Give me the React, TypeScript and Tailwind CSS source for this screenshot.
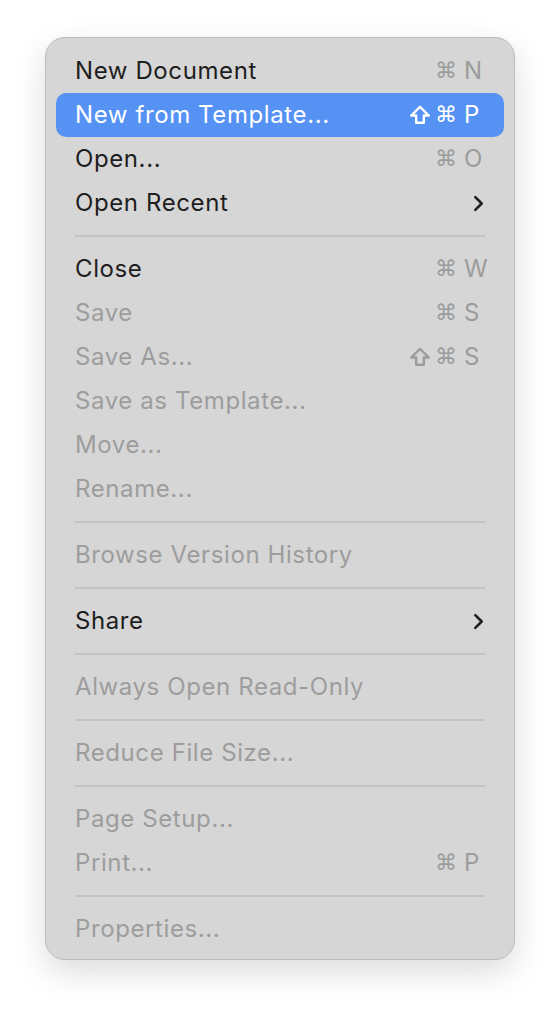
import React from 'react';

type Item =
  | { type: 'sep' }
  | { type: 'item'; label: string; mods?: string; key?: string; disabled?: boolean; selected?: boolean; submenu?: boolean };

const items: Item[] = [
  { type: 'item', label: 'New Document', mods: '⌘', key: 'N' },
  { type: 'item', label: 'New from Template...', mods: '⇧⌘', key: 'P', selected: true },
  { type: 'item', label: 'Open...', mods: '⌘', key: 'O' },
  { type: 'item', label: 'Open Recent', submenu: true },
  { type: 'sep' },
  { type: 'item', label: 'Close', mods: '⌘', key: 'W' },
  { type: 'item', label: 'Save', mods: '⌘', key: 'S', disabled: true },
  { type: 'item', label: 'Save As...', mods: '⇧⌘', key: 'S', disabled: true },
  { type: 'item', label: 'Save as Template...', disabled: true },
  { type: 'item', label: 'Move...', disabled: true },
  { type: 'item', label: 'Rename...', disabled: true },
  { type: 'sep' },
  { type: 'item', label: 'Browse Version History', disabled: true },
  { type: 'sep' },
  { type: 'item', label: 'Share', submenu: true },
  { type: 'sep' },
  { type: 'item', label: 'Always Open Read-Only', disabled: true },
  { type: 'sep' },
  { type: 'item', label: 'Reduce File Size...', disabled: true },
  { type: 'sep' },
  { type: 'item', label: 'Page Setup...', disabled: true },
  { type: 'item', label: 'Print...', mods: '⌘', key: 'P', disabled: true },
  { type: 'sep' },
  { type: 'item', label: 'Properties...', disabled: true },
];

function ShiftIcon({ className }: { className?: string }) {
  return (
    <svg viewBox="0 0 20 20" className={className} fill="none" stroke="currentColor" strokeWidth={2.2} strokeLinejoin="round">
      <path d="M10 2.5 L18 10.5 H13.5 V17 H6.5 V10.5 H2 Z" />
    </svg>
  );
}

function Chevron() {
  return (
    <svg viewBox="0 0 12 18" className="w-[11px] h-[17px]" fill="none" stroke="#1f1f1f" strokeWidth={2.8} strokeLinecap="round" strokeLinejoin="round">
      <path d="M2.5 2 L9.5 9 L2.5 16" />
    </svg>
  );
}

function Shortcut({ mods, k, selected }: { mods: string; k: string; selected?: boolean }) {
  const color = selected ? 'text-white' : 'text-[#9c9c9c]';
  return (
    <div className={`flex items-center ${color}`}>
      <div className="flex items-center justify-end gap-[4px] w-[60px]">
        {mods.includes('⇧') && <ShiftIcon className="w-[22px] h-[22px]" />}
        <span className="text-[22px] leading-none" style={{ fontFamily: '"DejaVu Sans", sans-serif' }}>⌘</span>
      </div>
      <span className="w-[25px] pl-[7px] text-[24px] leading-none">{k}</span>
    </div>
  );
}

export default function App() {
  return (
    <div className="w-[560px] h-[1014px] bg-white pt-[37px] pl-[45px]" style={{ fontFamily: 'Inter, "Liberation Sans", sans-serif' }}>
      <div className="w-[470px] bg-[#d6d6d6] border border-[#bcbcbc] rounded-[20px] pt-[11px] pb-[8px] px-[10px] shadow-[0_12px_32px_rgba(0,0,0,0.14)]">
        {items.map((it, i) => {
          if (it.type === 'sep') {
            return (
              <div key={i} className="h-[22px] flex items-center px-[19px]">
                <div className="h-[2px] w-full bg-[#c3c3c3]" />
              </div>
            );
          }
          const textColor = it.selected ? 'text-white' : it.disabled ? 'text-[#9d9d9d]' : 'text-[#1e1e1e]';
          return (
            <div
              key={i}
              className={`h-[44px] flex items-center justify-between pl-[19px] pr-[22px] rounded-[10px] ${it.selected ? 'bg-[#5592f4]' : ''}`}
            >
              <span className={`text-[24px] tracking-[0.6px] ${textColor}`}>{it.label}</span>
              {it.mods && it.key && <Shortcut mods={it.mods} k={it.key} selected={it.selected} />}
              {it.submenu && (
                <div className="-mr-[2px]">
                  <Chevron />
                </div>
              )}
            </div>
          );
        })}
      </div>
    </div>
  );
}
